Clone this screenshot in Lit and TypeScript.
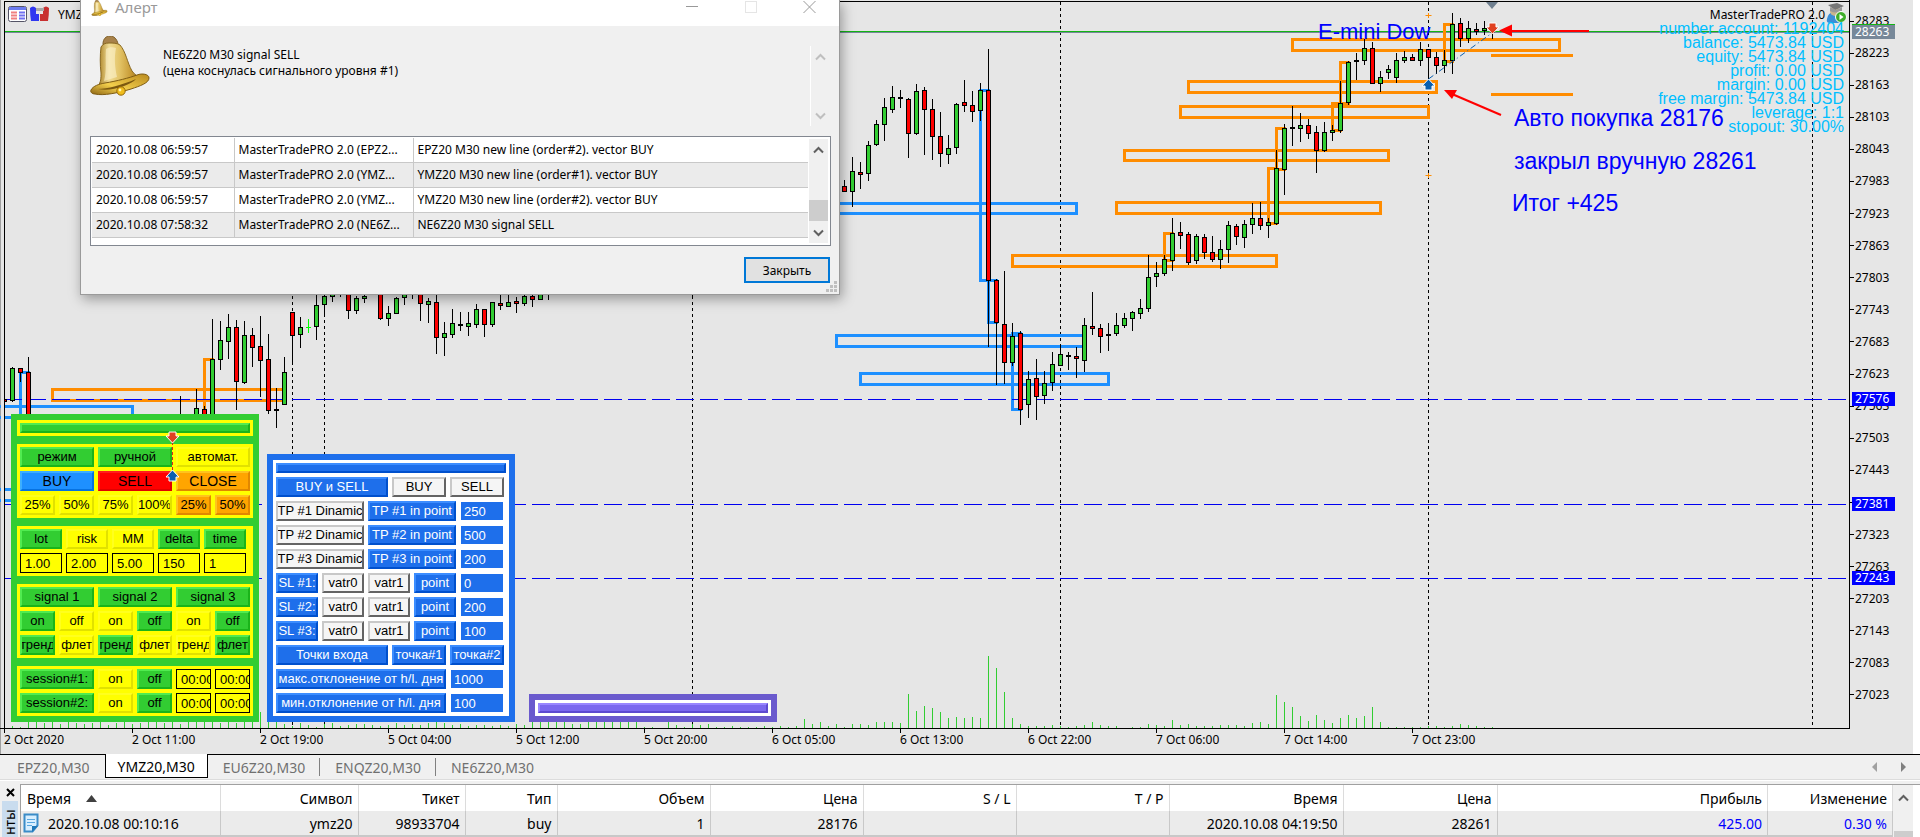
import { LitElement, html, svg, css } from "lit";
import { customElement } from "lit/decorators.js";

type Candle = [number, number, number, number, number, string];

/* x centre, then high / body top / body bottom / low in thirds of a pixel, then kind */
const CANDLES: Candle[] = [
  [4, 1197, 1197, 1206, 1206, "r"], [12, 1101, 1104, 1203, 1206, "g"], [20, 1104, 1104, 1119, 1146, "r"],
  [28, 1071, 1116, 1245, 1260, "r"], [180, 1188, 1250, 1250, 1250, "k"], [196, 1167, 1224, 1260, 1260, "g"],
  [204, 1218, 1227, 1260, 1260, "r"], [212, 957, 1077, 1260, 1260, "g"], [220, 963, 1020, 1080, 1110, "g"],
  [228, 942, 981, 1026, 1077, "g"], [236, 960, 981, 1146, 1230, "r"], [244, 963, 1005, 1149, 1152, "g"],
  [252, 984, 1005, 1044, 1101, "r"], [260, 948, 1038, 1083, 1191, "r"], [268, 1002, 1077, 1233, 1242, "r"],
  [276, 1164, 1227, 1233, 1284, "k"], [284, 1071, 1116, 1215, 1215, "g"], [292, 936, 936, 1008, 1089, "r"],
  [300, 951, 981, 1005, 1044, "g"], [308, 957, 981, 984, 999, "l"], [316, 885, 915, 981, 1020, "g"],
  [324, 880, 887, 915, 948, "g"], [332, 870, 870, 891, 906, "g"], [340, 870, 880, 880, 891, "k"],
  [348, 860, 870, 933, 957, "r"], [356, 888, 894, 933, 942, "g"], [364, 882, 888, 897, 909, "g"],
  [372, 870, 880, 885, 885, "k"], [380, 860, 870, 957, 960, "r"], [388, 918, 939, 957, 978, "g"],
  [396, 891, 894, 942, 942, "g"], [404, 870, 880, 894, 915, "g"], [412, 870, 876, 876, 897, "k"],
  [420, 860, 870, 912, 963, "r"], [428, 894, 903, 915, 969, "g"], [436, 870, 906, 1014, 1062, "r"],
  [444, 966, 999, 1014, 1068, "g"], [452, 927, 969, 1005, 1014, "g"], [460, 936, 972, 978, 993, "r"],
  [468, 936, 969, 981, 1008, "g"], [476, 912, 927, 975, 984, "g"], [484, 927, 927, 975, 1011, "r"],
  [492, 906, 906, 975, 981, "g"], [500, 880, 909, 918, 930, "r"], [508, 880, 906, 921, 921, "g"],
  [516, 891, 903, 912, 939, "r"], [524, 870, 888, 912, 918, "g"], [532, 880, 888, 900, 921, "r"],
  [540, 870, 876, 900, 900, "g"], [548, 870, 879, 885, 900, "k"], [692, 870, 872, 874, 894, "k"],
  [844, 540, 558, 576, 576, "r"], [852, 471, 513, 576, 621, "g"], [860, 486, 516, 525, 567, "r"],
  [868, 423, 435, 522, 543, "g"], [876, 360, 372, 435, 438, "g"], [884, 294, 321, 375, 423, "g"],
  [892, 258, 291, 330, 339, "g"], [900, 270, 291, 297, 324, "k"], [908, 294, 297, 402, 474, "r"],
  [916, 252, 273, 402, 405, "g"], [924, 261, 270, 330, 465, "r"], [932, 297, 327, 411, 480, "r"],
  [940, 336, 408, 462, 501, "r"], [948, 405, 444, 465, 492, "g"], [956, 309, 312, 444, 462, "g"],
  [964, 240, 306, 318, 336, "r"], [972, 273, 315, 336, 366, "r"], [980, 249, 270, 333, 363, "g"],
  [988, 147, 270, 843, 1041, "r"], [996, 837, 840, 969, 1155, "r"], [1004, 813, 972, 1089, 1152, "r"],
  [1012, 969, 1008, 1089, 1098, "g"], [1020, 993, 999, 1230, 1275, "r"], [1028, 1113, 1137, 1215, 1254, "g"],
  [1036, 1077, 1134, 1191, 1260, "r"], [1044, 1113, 1149, 1188, 1212, "g"], [1052, 1056, 1092, 1149, 1173, "g"],
  [1060, 1032, 1062, 1098, 1098, "g"], [1068, 1056, 1065, 1071, 1110, "k"], [1076, 1041, 1068, 1077, 1134, "r"],
  [1084, 954, 975, 1083, 1116, "g"], [1092, 876, 978, 987, 1005, "r"], [1100, 972, 984, 1011, 1059, "r"],
  [1108, 969, 1002, 1008, 1053, "k"], [1116, 939, 975, 1002, 1008, "g"], [1124, 939, 954, 978, 984, "g"],
  [1132, 933, 936, 957, 993, "g"], [1140, 897, 924, 942, 957, "g"], [1148, 765, 831, 927, 936, "g"],
  [1156, 786, 819, 831, 861, "g"], [1164, 765, 777, 822, 828, "g"], [1172, 654, 699, 783, 813, "g"],
  [1180, 666, 696, 708, 747, "r"], [1188, 696, 702, 789, 795, "r"], [1196, 702, 708, 783, 792, "g"],
  [1204, 702, 711, 759, 777, "r"], [1212, 708, 756, 780, 786, "r"], [1220, 720, 747, 780, 807, "g"],
  [1228, 663, 675, 750, 789, "g"], [1236, 672, 678, 711, 735, "r"], [1244, 660, 672, 714, 744, "g"],
  [1252, 609, 654, 675, 702, "g"], [1260, 606, 654, 678, 690, "r"], [1268, 654, 666, 678, 714, "g"],
  [1276, 450, 504, 672, 675, "g"], [1284, 372, 384, 510, 585, "g"], [1292, 318, 381, 387, 438, "k"],
  [1300, 339, 375, 387, 426, "g"], [1308, 357, 375, 402, 417, "r"], [1316, 378, 396, 453, 519, "r"],
  [1324, 366, 396, 453, 456, "g"], [1332, 375, 390, 399, 423, "g"], [1340, 243, 309, 393, 399, "g"],
  [1348, 183, 186, 309, 315, "g"], [1356, 159, 180, 186, 240, "k"], [1364, 117, 144, 183, 195, "g"],
  [1372, 126, 144, 252, 252, "r"], [1380, 213, 231, 252, 276, "g"], [1388, 195, 207, 219, 237, "g"],
  [1396, 159, 180, 234, 249, "g"], [1404, 153, 171, 183, 189, "g"], [1412, 162, 171, 183, 183, "r"],
  [1420, 126, 147, 183, 198, "g"], [1428, 147, 147, 174, 240, "r"], [1436, 156, 171, 198, 222, "r"],
  [1444, 150, 180, 198, 219, "g"], [1452, 39, 72, 183, 222, "g"], [1460, 54, 69, 117, 141, "r"],
  [1468, 63, 84, 117, 129, "g"], [1476, 69, 87, 96, 105, "r"], [1484, 63, 84, 93, 105, "g"],
  [1492, 90, 95, 99, 117, "k"],
];

const FILL: Record<string, string> = { g: "#32cd32", r: "#ff0000", k: "#000000" };

/* volume heights, one bar every 8 px starting at x = 12 */
const VOLUMES = [
  2, 1, 6, 6, 5, 6, 4, 6, 5, 4, 5, 6, 3, 5, 6, 4, 5, 6, 6, 5, 6, 4, 6, 6, 6, 6, 5, 6, 5, 6, 6, 16, 6, 6, 4, 2, 5,
  3, 1, 4, 5, 2, 3, 4, 4, 3, 2, 3, 5, 3, 4, 3, 5, 6, 5, 3, 4, 2, 3, 3, 2, 3, 2, 4, 3, 6, 6, 6, 6, 6, 4, 4, 6, 6,
  6, 6, 6, 6, 6, 1, 1, 0, 6, 3, 1, 4, 3, 4, 1, 1, 2, 1, 1, 1, 2, 1, 2, 1, 2,
  9, 4, 6, 2, 4, 1, 4, 4, 3, 6, 6, 6, 5, 34, 17, 22, 20, 16, 10, 11, 10, 11, 10, 72, 60, 36, 10, 4, 2, 2, 2,
  3, 2, 1, 2, 3, 6, 3, 2, 2, 0, 1, 1, 4, 3, 2, 8, 3, 4, 2, 2, 2, 3, 3, 3, 2, 5, 6, 4, 33, 26, 21, 12, 7, 13,
  8, 5, 10, 13, 10, 12, 21, 6, 1, 1, 1, 1, 1, 2, 2, 1, 2, 4, 3, 2, 1, 1,
];

const ZONES: [number, number, number, number, string][] = [
  [700, 203, 1076, 213, "b"], [836, 335, 1084, 346, "b"], [860, 373, 1108, 384, "b"],
  [980, 90, 988, 280, "b"], [988, 280, 996, 322, "b"], [1012, 333, 1020, 409, "b"],
  [20, 372, 28, 480, "b"], [-8, 406, 132, 417, "b"], [-8, 489, 100, 500, "b"],
  [1292, 39, 1559, 50, "o"], [1188, 81, 1436, 92, "o"], [1180, 106, 1428, 117, "o"],
  [1124, 150, 1388, 160, "o"], [1116, 202, 1380, 213, "o"], [1012, 255, 1276, 266, "o"],
  [1164, 233, 1172, 260, "o"], [1268, 168, 1276, 223, "o"], [1276, 128, 1284, 169, "o"],
  [1332, 103, 1340, 130, "o"], [1340, 62, 1348, 103, "o"], [1444, 24, 1452, 61, "o"],
  [204, 359, 212, 440, "o"], [52, 389, 284, 400, "o"],
];

const PRICES = [
  28283, 28223, 28163, 28103, 28043, 27983, 27923, 27863, 27803, 27743, 27683, 27623, 27563, 27503, 27443, 27383,
  27323, 27263, 27203, 27143, 27083, 27023,
];

const LEVELS = [{ y: 399, p: 27576 }, { y: 504, p: 27381 }, { y: 578, p: 27243 }];

const TIMES = [
  "2 Oct 2020", "2 Oct 11:00", "2 Oct 19:00", "5 Oct 04:00", "5 Oct 12:00", "5 Oct 20:00", "6 Oct 05:00",
  "6 Oct 13:00", "6 Oct 22:00", "7 Oct 06:00", "7 Oct 14:00", "7 Oct 23:00",
];

const ACCOUNT = [
  "number account: 1192404", "balance: 5473.84 USD", "equity: 5473.84 USD", "profit: 0.00 USD",
  "margin: 0.00 USD", "free margin: 5473.84 USD", "leverage: 1:1", "stopout: 30.00%",
];

const sellMark = (x: number, y: number) => svg`
  <path d="M${x - 3} ${y - 5}h7v4h3l-6.500 7-6.500-7h3z" fill="#e04020" stroke="#fff"/>`;
const buyMark = (x: number, y: number) => svg`
  <path d="M${x - 3} ${y + 5}h7v-4h3l-6.500-7-6.500 7h3z" fill="#0a5fb0" stroke="#fff"/>`;

const bell = svg`
  <defs>
    <linearGradient id="gold" x1="0" x2="1" y1="0" y2="0">
      <stop offset="0" stop-color="#a67c1e"/><stop offset=".25" stop-color="#f0dc96"/>
      <stop offset=".5" stop-color="#e2c264"/><stop offset=".75" stop-color="#c79a35"/><stop offset="1" stop-color="#8a6216"/>
    </linearGradient>
    <linearGradient id="rim" x1="0" x2="1" y1="1" y2="0">
      <stop offset="0" stop-color="#8d6413"/><stop offset=".4" stop-color="#f3cf4c"/><stop offset="1" stop-color="#b98a1f"/>
    </linearGradient>
  </defs>
  <path d="M13 8C13 3 16 0 20 0c4 0 7 3 8 8l-3 4H14z" fill="#a8824a" stroke="#7d5d25"/>
  <path d="M11 11c2-3 4-4 8-4s8 0 11 2c6 7 7 17 12 26 3 4 6 6 10 7L8 50c3-4 3-8 3-13-1-8-1-18 0-26z" fill="url(#gold)" stroke="#8a6a22"/>
  <path d="M16 13c3-2 7-2 10-1-2 10-1 20 1 29l-13 4c3-11 1-21 2-32z" fill="#fbf2cd" opacity=".6"/>
  <path d="M1 54c2-4 8-6 14-7 12-2 24-5 32-8 5-2 12-1 12 3 0 5-9 8-18 11-13 4-28 7-36 5-3 0-5-2-4-4z" fill="url(#rim)" stroke="#7e5c14"/>
  <path d="M8 53c9 0 24-4 38-10-5 6-25 13-38 10z" fill="#7c5910"/>
  <circle cx="31" cy="55" r="4.200" fill="#f0bd1c" stroke="#95690c"/>
  <circle cx="30" cy="54" r="1.400" fill="#fff3b0"/>`;

@customElement("trade-chart")
export class TradeChart extends LitElement {
  static styles = css`
    :host { display: block; overflow: hidden; }
    svg { display: block; width: 100%; height: 100%; }
    .zone { fill: none; stroke-width: 3; shape-rendering: crispEdges; }
    .b { stroke: #1e90ff; }
    .o { stroke: #ff8c00; }
    .crisp { shape-rendering: crispEdges; }
    .note { font: 23px "Liberation Sans", Arial, sans-serif; fill: #0000ff; }
    .name { font-size: 22px; }
    .small { font: 12px "Noto Sans", sans-serif; fill: #000; }
    .info { font: 16px "Liberation Sans", Arial, sans-serif; fill: #00bfff; text-anchor: end; }
  `;

  render() {
    return html`<svg role="img" aria-label="YMZ20,M30">
      <g class="crisp">
        ${[292, 324, 692, 1060, 1428, 1812].map(
          (x) => svg`<line x1=${x + 0.5} x2=${x + 0.5} y1="2" y2="728" stroke="#000" stroke-dasharray="3 3"/>`)}
        ${VOLUMES.map((h, i) => svg`<rect x=${12 + i * 8} y=${728 - h} width="1" height=${h} fill="#32cd32"/>`)}
        <rect x="4" y="31" width="1845" height="1" fill="#14b414"/>
        <rect x="4" y="32" width="1845" height="1" fill="#778899"/>
      </g>
      ${ZONES.map(([x1, y1, x2, y2, c]) => svg`
        <rect class="zone ${c}" x=${x1 + 0.5} y=${y1 + 0.5} width=${x2 - x1} height=${y2 - y1}/>`)}
      <path class="zone o" d="M1491 55.500H1573M1491 94.500H1573"/>
      <g class="crisp">
        ${LEVELS.map((l) => svg`<line x1="4" x2="1848" y1=${l.y + 0.5} y2=${l.y + 0.5} stroke="#0000f0" stroke-dasharray="18 6"/>`)}
        ${CANDLES.map(([x, h, t, b, l, k]) => {
          const [hy, ty, by, ly] = [h, t, b, l].map((v) => Math.round(v / 3));
          if (k === "l")
            return svg`<path d="M${x + 0.5} ${hy}V${ly}M${x - 2} ${ty + 0.5}H${x + 3}" stroke="#00ff00"/>`;
          return svg`<rect x=${x} y=${hy} width="1" height=${ly - hy} fill="#000"/>
            <rect x=${x - 2} y=${ty} width="5" height=${by - ty} fill="#000"/>
            ${k === "k" ? "" : svg`<rect x=${x - 1} y=${ty + 1} width="3" height=${Math.max(by - ty - 2, 0)} fill=${FILL[k]}/>`}`;
        })}
        <rect x="1" y="0" width="3" height="100%" fill="#e6e6e6"/>
        <rect x="4" y="1" width="1" height="100%" fill="#000"/>
      </g>
      <path d="M1428.500 79L1492 33" stroke="#0a5fb0" stroke-dasharray="6 3 1 3"/>
      <path d="M1486 2h12l-6 7z" fill="#708090"/>
      <path d="M1425.500 15.500h6M1428.500 13v5M1425.500 175.500h6M1428.500 173v5" stroke="#ff8c00"/>
      ${sellMark(1492, 28)} ${buyMark(1428, 85)}
      <path d="M1510 31H1589" stroke="#f00" stroke-width="2"/>
      <path d="M1499 30.500l13-6v12z" fill="#f00"/>
      <path d="M1452 94L1501 115" stroke="#f00" stroke-width="2"/>
      <path d="M1444 90l13 0-5 9z" fill="#f00"/>

      <text class="small" x="58" y="19">YMZ20,M30</text>
      <g>
        <rect x="8.500" y="6.500" width="18" height="15" rx="2" fill="#fff" stroke="#556"/>
        <path d="M9 8.500h17" stroke="#6c7cf0" stroke-width="3"/>
        <path d="M11 12.500h6M11 15.500h6M11 18.500h6" stroke="#f08080" stroke-width="2"/>
        <path d="M19 12.500h6M19 15.500h6M19 18.500h6" stroke="#7070f0" stroke-width="2"/>
        <path d="M30 8q3-3 6 0v6h3v7h-8q-1-6-1-13z" fill="#3038f0"/>
        <path d="M49 8q-3-3-6 0v6h-3v7h8q1-6 1-13z" fill="#c83030"/>
        <path d="M36 9.500h8" stroke="#aaa" stroke-width="3"/>
      </g>
      <text class="small" x="1825" y="19" text-anchor="end">MasterTradePRO 2.0</text>
      <g>
        <path d="M1827 19q1-6 6-7l6 2 2 9h-12q-3-1-2-4z" fill="#3a8fd8"/>
        <circle cx="1835" cy="11" r="5" fill="#c9b48c"/>
        <path d="M1828 5l9-2 7 3-9 4z" fill="#777"/><path d="M1830 7l6 3 6-3v4q-6 3-12 0z" fill="#999"/>
        <circle cx="1841" cy="17" r="5.500" fill="#3fae2a" stroke="#fff"/><path d="M1839.500 14l4 3-4 3z" fill="#fff"/>
      </g>
      <text class="note name" x="1318" y="39">E-mini Dow</text>
      <text class="note" x="1514" y="126">Авто покупка 28176</text>
      <text class="note" x="1514" y="169">закрыл вручную 28261</text>
      <text class="note" x="1512" y="211">Итог +425</text>
      ${ACCOUNT.map((t, i) => svg`<text class="info" x="1844" y=${34 + i * 14}>${t}</text>`)}
    </svg>`;
  }
}

@customElement("order-panel")
export class OrderPanel extends LitElement {
  static styles = css`
    :host { display: block; position: relative; }
    .panel { width: 248px; box-sizing: border-box; padding: 6px; background: #32cd32; display: flex; flex-direction: column; gap: 8px; }
    .box { background: #ffff00; padding: 3px; display: flex; flex-direction: column; gap: 4px; }
    .row { display: flex; gap: 4px; }
    button, input { box-sizing: border-box; min-width: 0; height: 20px; margin: 0; border-radius: 0; font: 13px/16px "Liberation Sans", Arial, sans-serif; color: #000; }
    button { flex: 1 1 0; padding: 0; border: 2px solid; overflow: hidden; white-space: nowrap; display: flex; align-items: center; justify-content: center; }
    .w74 { flex: 0 0 74px; }
    .w42 { flex: 0 0 42px; width: 42px; }
    .w35 { flex: 0 0 35px; width: 35px; }
    .bar { height: 10px; }
    .bar, .green { background: #32cd32; border-color: #50eb50 #1ab41a #1ab41a #50eb50; }
    .yellow { background: #ffff00; border-color: #ffff1e #e1e100 #e1e100 #ffff1e; }
    .buy { background: #1e90ff; border-color: #3caeff #0672e1 #0672e1 #3caeff; }
    .sell { background: #ff0000; border-color: #ff1e1e #e10000 #e10000 #ff1e1e; }
    .close { background: #ffa500; border-color: #ffc31e #e18700 #e18700 #ffc31e; }
    .big { font-size: 14px; }
    input { background: #ffff00; border: 1px solid #000; padding: 0 0 0 4px; }
    .marks { position: absolute; left: 152px; top: 16px; width: 20px; height: 54px; pointer-events: none; }
  `;

  b(label: string, tone = "green", extra = "") {
    return html`<button class="${tone} ${extra}">${label}</button>`;
  }

  render() {
    const b = this.b;
    return html`<div class="panel">
      <div class="box"><div class="row"><button class="bar" aria-label="drag"></button></div></div>
      <div class="box">
        <div class="row">${b("режим")}${b("ручной")}${b("автомат.", "yellow")}</div>
        <div class="row">${b("BUY", "buy", "big")}${b("SELL", "sell", "big")}${b("CLOSE", "close", "big")}</div>
        <div class="row">${["25%", "50%", "75%", "100%"].map((t) => b(t, "yellow"))}${b("25%", "close")}${b("50%", "close")}</div>
      </div>
      <div class="box">
        <div class="row">
          ${b("lot", "green", "w42")}${b("risk", "yellow", "w42")}${b("MM", "yellow", "w42")}${b("delta", "green", "w42")}${b("time", "green", "w42")}
        </div>
        <div class="row">
          ${[["lot", "1.00"], ["risk", "2.00"], ["MM", "5.00"], ["delta", "150"], ["time", "1"]].map(
            ([n, v]) => html`<input class="w42" aria-label=${n} .value=${v} />`)}
        </div>
      </div>
      <div class="box">
        <div class="row">${b("signal 1")}${b("signal 2")}${b("signal 3")}</div>
        <div class="row">${b("on")}${b("off", "yellow")}${b("on", "yellow")}${b("off")}${b("on", "yellow")}${b("off")}</div>
        <div class="row">${b("тренд")}${b("флет", "yellow")}${b("тренд")}${b("флет", "yellow")}${b("тренд", "yellow")}${b("флет")}</div>
      </div>
      <div class="box">
        ${[1, 2].map((n) => html`<div class="row">
          ${b(`session#${n}:`, "green", "w74")}${b("on", "yellow")}${b("off")}
          <input class="w35" aria-label="start ${n}" .value=${"00:00"} /><input class="w35" aria-label="end ${n}" .value=${"00:00"} />
        </div>`)}
      </div>
    </div>
    <svg class="marks">
      <path d="M9.500 12V40" stroke="#d22" stroke-dasharray="3 2"/>
      ${sellMark(9, 7)} ${buyMark(9, 46)}
    </svg>`;
  }
}

@customElement("target-panel")
export class TargetPanel extends LitElement {
  static styles = css`
    .panel { width: 248px; box-sizing: border-box; padding: 6px; background: #1e6feb; }
    .box { background: #fff; padding: 3px; display: flex; flex-direction: column; gap: 4px; }
    .row { display: flex; gap: 4px; padding-right: 2px; }
    button, input { box-sizing: border-box; min-width: 0; height: 20px; margin: 0; border-radius: 0; font: 13px/16px "Liberation Sans", Arial, sans-serif; }
    button { flex: 1 1 0; padding: 0; border: 2px solid; overflow: hidden; white-space: nowrap; display: flex; align-items: center; justify-content: center; }
    .blue { background: #1e6feb; color: #fff; border-color: #3c8dff #0050cd #0050cd #3c8dff; }
    .white { background: #f5f5f5; color: #000; border-color: #c8c8c8 #646464 #646464 #c8c8c8; }
    .bar { height: 10px; margin-right: -2px; }
    .w54 { flex: 0 0 54px; width: 54px; }
    .w44 { flex: 0 0 44px; width: 44px; }
    input { background: #1e6feb; color: #fff; border: 1px solid #fff; padding: 0 0 0 3px; }
  `;

  render() {
    const b = (t: string, tone = "blue", extra = "") => html`<button class="${tone} ${extra}">${t}</button>`;
    const field = (label: string, v: string, w = "w44") => html`<input class=${w} aria-label=${label} .value=${v} />`;
    return html`<div class="panel"><div class="box">
      <div class="row"><button class="blue bar" aria-label="drag"></button></div>
      <div class="row">${b("BUY и SELL")}${b("BUY", "white", "w54")}${b("SELL", "white", "w54")}</div>
      ${["250", "500", "200"].map((v, i) => html`<div class="row">
        ${b(`TP #${i + 1} Dinamic`, "white")}${b(`TP #${i + 1} in point`)}${field(`TP ${i + 1}`, v)}</div>`)}
      ${["0", "200", "100"].map((v, i) => html`<div class="row">
        ${b(`SL #${i + 1}:`)}${b("vatr0", "white")}${b("vatr1", "white")}${b("point")}${field(`SL ${i + 1}`, v)}</div>`)}
      <div class="row">${b("Точки входа")}${b("точка#1", "blue", "w54")}${b("точка#2", "blue", "w54")}</div>
      <div class="row">${b("макс.отклонение от h/l. дня")}${field("макс.", "1000", "w54")}</div>
      <div class="row">${b("мин.отклонение от h/l. дня")}${field("мин.", "100", "w54")}</div>
    </div></div>`;
  }
}

@customElement("alert-dialog")
export class AlertDialog extends LitElement {
  static styles = css`
    :host { display: block; width: 760px; box-sizing: border-box; background: #f0f0f0; border: 1px solid #9a9a9a; border-top: 0;
      box-shadow: 2px 4px 12px rgba(0, 0, 0, 0.35); font: 12px/16px "Noto Sans", sans-serif; color: #000; position: relative; }
    .title { display: flex; height: 26px; background: #fff; color: #999; }
    .title .name { flex: 1; display: flex; gap: 7px; padding-left: 10px; font-size: 15px; line-height: 15px; }
    .title button { width: 59px; height: 13px; padding: 0; border: 0; background: none; }
    .title button svg, .arrow svg { display: block; margin: auto; }
    .message { display: flex; padding: 10px 9px 0; height: 110px; box-sizing: border-box; }
    .message .bell { flex: none; }
    .message p { flex: 1; margin: 11px 0 0 13px; }
    .scroll { width: 20px; height: 80px; margin-top: 10px; border-left: 1px solid #fff; display: flex; flex-direction: column; justify-content: space-between; padding: 6px 0; box-sizing: border-box; }
    .arrow { border: 0; padding: 0; background: none; height: 9px; }
    .list { margin: 0 8px 0 9px; border: 1px solid #828790; background: #fff; padding: 1px; height: 110px; box-sizing: border-box; display: flex; }
    table { flex: 1; border-collapse: collapse; table-layout: fixed; align-self: flex-start; }
    td { height: 24px; padding: 0 0 0 4px; border-bottom: 1px solid #c8c8c8; border-left: 1px solid #c8c8c8; white-space: nowrap; overflow: hidden; }
    td:first-child { border-left: 0; }
    tr:nth-child(even) { background: #ebebeb; }
    .bar { width: 19px; margin: 1px; background: #f0f0f0; display: flex; flex-direction: column; align-items: center; padding: 6px 0; box-sizing: border-box; }
    .thumb { width: 19px; height: 21px; margin-top: auto; margin-bottom: 7px; background: #cdcdcd; }
    .foot { display: flex; justify-content: flex-end; padding: 11px 9px 11px; }
    .foot button { width: 86px; height: 26px; border: 2px solid #0078d7; background: #e1e1e1; font: 12px "Noto Sans", sans-serif; color: #000; padding: 0; }
    .grip { position: absolute; right: 2px; bottom: 2px; fill: #bfbfbf; }
  `;

  render() {
    const chev = (up: boolean, c: string) => html`<svg width="11" height="8"><path d=${up ? "M1 6.500l4.500-4.500 4.500 4.500" : "M1 1.500l4.500 4.500 4.500-4.500"} fill="none" stroke=${c} stroke-width="2"/></svg>`;
    const rows = [
      ["2020.10.08 06:59:57", "MasterTradePRO 2.0 (EPZ2...", "EPZ20 M30 new line (order#2). vector BUY"],
      ["2020.10.08 06:59:57", "MasterTradePRO 2.0 (YMZ...", "YMZ20 M30 new line (order#1). vector BUY"],
      ["2020.10.08 06:59:57", "MasterTradePRO 2.0 (YMZ...", "YMZ20 M30 new line (order#2). vector BUY"],
      ["2020.10.08 07:58:32", "MasterTradePRO 2.0 (NE6Z...", "NE6Z20 M30 signal SELL"],
    ];
    return html`
      <div class="title">
        <span class="name"><svg width="17" height="16" viewBox="0 0 60 60">${bell}</svg>Алерт</span>
        <button aria-label="Свернуть"><svg width="12" height="13"><path d="M0 6.500h12" stroke="#999"/></svg></button>
        <button aria-label="Развернуть"><svg width="12" height="13"><rect x=".5" y="1.500" width="11" height="11" fill="none" stroke="#e5e5e5"/></svg></button>
        <button aria-label="Закрыть"><svg width="13" height="13"><path d="M.5 1l12 12M12.500 1l-12 12" stroke="#999"/></svg></button>
      </div>
      <div class="message">
        <svg class="bell" width="60" height="60">${bell}</svg>
        <p>NE6Z20 M30 signal SELL<br />(цена коснулась сигнального уровня #1)</p>
        <div class="scroll"><button class="arrow" aria-label="Вверх">${chev(true, "#bfbfbf")}</button><button class="arrow" aria-label="Вниз">${chev(false, "#bfbfbf")}</button></div>
      </div>
      <div class="list">
        <table>
          <colgroup><col style="width:142px" /><col style="width:179px" /><col /></colgroup>
          <tbody>${rows.map((r) => html`<tr>${r.map((c) => html`<td>${c}</td>`)}</tr>`)}</tbody>
        </table>
        <div class="bar"><button class="arrow" aria-label="Вверх">${chev(true, "#606060")}</button><div class="thumb"></div><button class="arrow" aria-label="Вниз">${chev(false, "#606060")}</button></div>
      </div>
      <div class="foot"><button>Закрыть</button></div>
      <svg class="grip" width="11" height="11"><path d="M8 0h3v3h-3zM4 4h3v3h-3zM8 4h3v3h-3zM0 8h3v3h-3zM4 8h3v3h-3zM8 8h3v3h-3z"/></svg>`;
  }
}

@customElement("deals-table")
export class DealsTable extends LitElement {
  static styles = css`
    :host { display: flex; height: 53px; flex: none; overflow: hidden; background: #f0f0f0; font: 14px "Noto Sans", sans-serif; color: #000; }
    .side { width: 20px; flex: none; display: flex; flex-direction: column; align-items: center; }
    .x { border: 0; background: none; padding: 0; width: 20px; height: 17px; }
    .tab { writing-mode: vertical-rl; transform: rotate(180deg); width: 16px; flex: 1; background: #c9dcee; line-height: 16px; font-size: 14px; display: flex; align-items: center; justify-content: flex-end; padding-bottom: 8px; }
    .main { flex: 1; display: flex; border-top: 1px solid #a0a0a0; background: #fff; border-left: 1px solid #a0a0a0; }
    table { flex: 1; border-collapse: collapse; table-layout: fixed; width: 100%; align-self: flex-start; }
    th, td { font-weight: 400; text-align: right; padding: 0 5px 0 0; border-right: 1px solid #dcdcdc; white-space: nowrap; }
    th { height: 26px; }
    td { height: 24px; background: #ebebeb; border-right-color: #c8c8c8; border-bottom: 2px solid #c8c8c8; }
    th:first-child { text-align: left; padding-left: 6px; }
    .first { display: flex; align-items: center; gap: 9px; padding-left: 2px; }
    .sort { margin-left: 15px; }
    .money { color: #0000ff; }
    .scroll { width: 20px; background: #f0f0f0; display: flex; flex-direction: column; align-items: center; justify-content: space-between; padding-top: 9px; box-sizing: border-box; margin-right: 7px; }
    .thumb { width: 19px; height: 6px; background: #cdcdcd; }
  `;

  render() {
    const widths = ["199px", "138px", "107px", "92px", "153px", "153px", "153px", "153px", "174px", "154px", "auto", "125px"];
    const heads = ["Символ", "Тикет", "Тип", "Объем", "Цена", "S / L", "T / P", "Время", "Цена", "Прибыль", "Изменение"];
    const cells = ["ymz20", "98933704", "buy", "1", "28176", "", "", "2020.10.08 04:19:50", "28261", "425.00", "0.30 %"];
    return html`
      <div class="side">
        <button class="x" aria-label="Закрыть"><svg width="9" height="9"><path d="M1 1l7 7M8 1l-7 7" stroke="#000" stroke-width="2"/></svg></button>
        <div class="tab">нты</div>
      </div>
      <div class="main">
        <table>
          <colgroup>${widths.map((w) => html`<col style="width:${w}" />`)}</colgroup>
          <thead><tr>
            <th>Время<svg class="sort" width="11" height="10"><path d="M0 8L5.500 1 11 8z" fill="#404040"/></svg></th>
            ${heads.map((h) => html`<th>${h}</th>`)}
          </tr></thead>
          <tbody><tr>
            <td><span class="first"><svg width="16" height="20"><path d="M1.500 1.500h13v11l-5 6h-8z" fill="#d8efff" stroke="#3a8cc8" stroke-width="2"/><path d="M4 6.500h8M4 9.500h8M4 12.500h5" stroke="#5aa8e0"/><path d="M9 19v-6h6z" fill="#1f78b8"/></svg>2020.10.08 00:10:16</span></td>
            ${cells.map((c, i) => html`<td class=${i > 8 ? "money" : ""}>${c}</td>`)}
          </tr></tbody>
        </table>
        <div class="scroll"><svg width="11" height="8"><path d="M1 6.500l4.500-4.500 4.500 4.500" fill="none" stroke="#606060" stroke-width="2"/></svg><div class="thumb"></div></div>
      </div>`;
  }
}

@customElement("app-root")
export class AppRoot extends LitElement {
  static styles = css`
    :host { display: flex; flex-direction: column; height: 100vh; min-height: 480px; overflow: hidden; background: #f0f0f0; }
    .chart { flex: 1; min-height: 0; position: relative; display: grid; grid-template: minmax(0, 1fr) 25px / minmax(0, 1fr) 63px; margin-right: 7px; background: #e6e6e6; box-shadow: 7px 0 #fff; border-left: 1px solid #a0a0a0; font: 12px/32px "Noto Sans", sans-serif; color: #000; }
    .plot { position: relative; overflow: hidden; border-right: 1px solid #000; border-bottom: 1px solid #000; margin-left: -1px; }
    .frame { position: absolute; inset: 1px 0 0 4px; border-top: 1px solid #000; }
    trade-chart { position: absolute; inset: 0; }
    .prices { position: relative; padding: 5px 0 18px; overflow: hidden; box-sizing: border-box; display: flex; flex-direction: column; justify-content: space-between; }
    .price { display: flex; align-items: center; gap: 1px; }
    .price::before { content: ""; width: 4px; height: 1px; background: #000; }
    .tag { position: absolute; left: 2px; width: 43px; height: 14px; line-height: 14px; padding-left: 3px; box-sizing: border-box; background: #0000ff; color: #fff; }
    .now { background: #778899; border-top: 1px solid #14b414; height: 15px; }
    .times { grid-column: 1 / -1; display: flex; overflow: hidden; padding-left: 3px; }
    .time { flex: 0 0 128px; line-height: 22px; position: relative; }
    .time::before { content: ""; position: absolute; left: 0; top: 0; width: 1px; height: 4px; background: #000; }
    .panels { position: absolute; left: 11px; bottom: 6px; display: flex; align-items: flex-end; gap: 8px; }
    .purple { width: 248px; margin-left: 6px; padding: 6px; box-sizing: border-box; background: #6a5acd; }
    .purple div { background: #fff; padding: 3px; display: flex; }
    .purple button { flex: 1; height: 10px; padding: 0; border: 2px solid; border-color: #9986ff #5d4ad0 #5d4ad0 #9986ff; background: #7b68ee; }
    alert-dialog { position: absolute; left: 79px; top: 0; }
    .tabs { flex: none; display: flex; height: 24px; border-top: 1px solid #000; border-bottom: 1px solid #dcdcdc; box-shadow: 0 1px #fff; margin-bottom: 4px; font: 14px/25px "Noto Sans", sans-serif; padding-left: 2px; }
    .tabs button { border: 0; background: none; padding: 0 15px; margin: 0; font: inherit; color: #707070; position: relative; }
    .tabs .on { background: #fff; color: #000; border: 1px solid #000; border-top: 0; padding: 0 12px; margin-top: -1px; height: 24px; }
    .tabs .sep::after { content: ""; position: absolute; right: 0; top: 3px; height: 18px; width: 1px; background: #808080; }
    .tabs .nav { margin-left: auto; display: flex; gap: 14px; align-items: center; padding: 0 10px; }
    .tabs .nav button { padding: 0; width: 14px; display: flex; justify-content: center; }
  `;

  render() {
    return html`
      <section class="chart">
        <div class="plot">
          <div class="frame"></div>
          <trade-chart></trade-chart>
          <div class="panels">
            <order-panel></order-panel>
            <target-panel></target-panel>
            <div class="purple"><div><button aria-label="drag"></button></div></div>
          </div>
        </div>
        <div class="prices">
          ${PRICES.map((p) => html`<div class="price">${p}</div>`)}
          <span class="tag now" style="top:24px">28263</span>
          ${LEVELS.map((l) => html`<span class="tag" style="top:${l.y - 7}px">${l.p}</span>`)}
        </div>
        <div class="times">${TIMES.map((t) => html`<span class="time">${t}</span>`)}</div>
        <alert-dialog role="dialog" aria-label="Алерт"></alert-dialog>
      </section>
      <nav class="tabs">
        <button>EPZ20,M30</button><button class="on">YMZ20,M30</button><button class="sep">EU6Z20,M30</button><button class="sep">ENQZ20,M30</button><button>NE6Z20,M30</button>
        <span class="nav">
          <button aria-label="Назад"><svg width="6" height="10"><path d="M5 0v10L0 5z" fill="#a0a0a0"/></svg></button>
          <button aria-label="Вперёд"><svg width="6" height="10"><path d="M1 0v10l5-5z" fill="#808080"/></svg></button>
        </span>
      </nav>
      <deals-table></deals-table>`;
  }
}
